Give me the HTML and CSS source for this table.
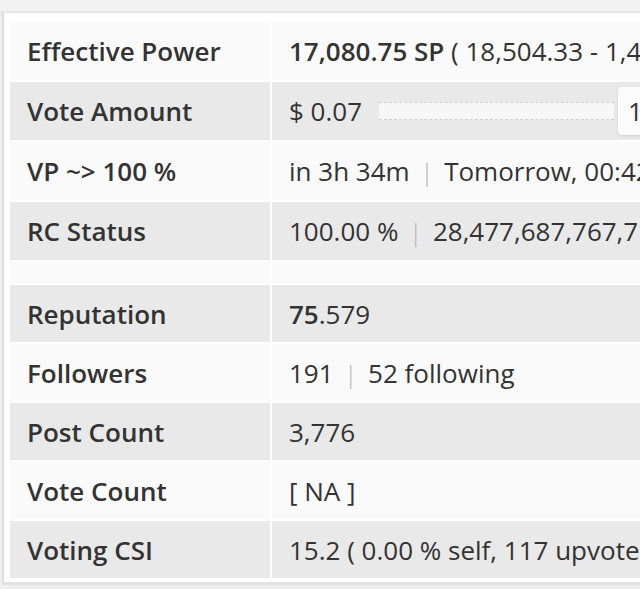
FILE: index.html
```html
<!DOCTYPE html>
<html lang="en">
<head>
<meta charset="utf-8">
<title>Account stats</title>
<link rel="stylesheet" href="styles.css">
</head>
<body>
<div class="topbar"></div>
<div class="card">
  <table class="stats">
    <colgroup>
      <col class="c-label">
      <col class="c-value">
    </colgroup>
    <tbody class="group-power">
      <tr class="light">
        <th>Effective Power</th>
        <td><b>17,080.75 SP</b> ( 18,504.33 - 1,423.58 )</td>
      </tr>
      <tr class="dark">
        <th>Vote Amount</th>
        <td>
          <div class="vote">
            <span>$ 0.07</span>
            <span class="track"></span>
            <span class="pct">100 %</span>
          </div>
        </td>
      </tr>
      <tr class="light">
        <th>VP ~&gt; 100 %</th>
        <td>in 3h 34m <span class="sep">|</span> Tomorrow, 00:42</td>
      </tr>
      <tr class="dark">
        <th>RC Status</th>
        <td>100.00 % <span class="sep">|</span> 28,477,687,767,712 RC</td>
      </tr>
      <tr class="light spacer">
        <th></th>
        <td></td>
      </tr>
    </tbody>
    <tbody class="group-social">
      <tr class="dark">
        <th>Reputation</th>
        <td><b>75</b>.579</td>
      </tr>
      <tr class="light">
        <th>Followers</th>
        <td>191 <span class="sep">|</span> 52 following</td>
      </tr>
      <tr class="dark">
        <th>Post Count</th>
        <td>3,776</td>
      </tr>
      <tr class="light">
        <th>Vote Count</th>
        <td>[ NA ]</td>
      </tr>
      <tr class="dark">
        <th>Voting CSI</th>
        <td>15.2 ( 0.00 % self, 117 upvotes, 52 accounts, last 7d )</td>
      </tr>
    </tbody>
  </table>
</div>
</body>
</html>
```

FILE: styles.css
```css
html, body {
  margin: 0;
  padding: 0;
  overflow: hidden;
  background: #efefef;
  font-family: "Open Sans", "Noto Sans", sans-serif;
  color: #333;
}

.topbar {
  height: 11px;
  background: #f3f3f3;
  border-bottom: 2px solid #e6e6e6;
}

.card {
  margin-left: 2px;
  width: 980px;
  border-left: 2px solid #dcdcdc;
  border-bottom: 3px solid #e2e2e2;
  background: #fff;
  padding: 7px 0 2px 4px;
}

.stats {
  border-collapse: separate;
  border-spacing: 2px;
  table-layout: fixed;
  width: 970px;
  font-size: 26px;
}

.c-label { width: 260px; }
.c-value { width: 704px; }

.stats th,
.stats td {
  height: 57px;
  padding: 0 17px;
  text-align: left;
  white-space: nowrap;
  overflow: hidden;
  vertical-align: middle;
}

.group-power th,
.group-power td {
  height: 58px;
}

.stats th {
  font-weight: 600;
}

.stats td {
  font-weight: 400;
}

.stats b {
  font-weight: 600;
}

.light th, .light td { background: #fafafa; }
.dark th, .dark td { background: #e9e9e9; }

.stats .spacer th, .stats .spacer td { height: 21px; padding: 0; }

.sep {
  color: #b0b0b0;
  margin: 0 4px;
  font-size: 24px;
  font-weight: 300;
}

.vote {
  display: flex;
  align-items: center;
}

.track {
  display: block;
  width: 235px;
  height: 16px;
  margin-left: 17px;
  border-top: 1px dashed #cfcfcf;
  border-bottom: 1px dashed #cfcfcf;
  background: #f7f7f7;
}

.pct {
  display: block;
  margin-left: 4px;
  padding: 6px 10px;
  background: #fbfbfb;
  border-radius: 4px;
  box-shadow: 0 1px 3px rgba(0,0,0,0.12);
}
```
